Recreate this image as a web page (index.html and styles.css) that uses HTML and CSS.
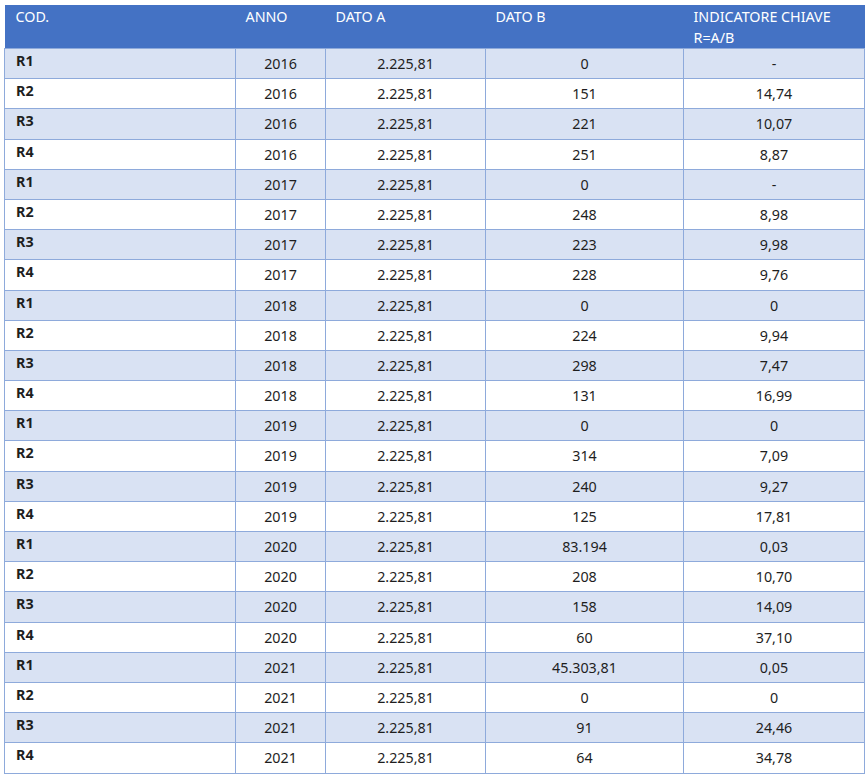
FILE: index.html
```html
<!DOCTYPE html>
<html lang="it">
<head>
<meta charset="utf-8">
<link rel="stylesheet" href="styles.css">
</head>
<body>
<table class="grid">
  <colgroup>
    <col class="c1"><col class="c2"><col class="c3"><col class="c4"><col class="c5">
  </colgroup>
  <thead>
    <tr class="head">
      <th class="first">COD.</th><th>ANNO</th><th>DATO A</th><th>DATO B</th><th>INDICATORE CHIAVE<br>R=A/B</th>
    </tr>
  </thead>
  <tbody>
    <tr class="alt"><td class="code">R1</td><td>2016</td><td>2.225,81</td><td>0</td><td>-</td></tr>
    <tr><td class="code">R2</td><td>2016</td><td>2.225,81</td><td>151</td><td>14,74</td></tr>
    <tr class="alt"><td class="code">R3</td><td>2016</td><td>2.225,81</td><td>221</td><td>10,07</td></tr>
    <tr><td class="code">R4</td><td>2016</td><td>2.225,81</td><td>251</td><td>8,87</td></tr>
    <tr class="alt"><td class="code">R1</td><td>2017</td><td>2.225,81</td><td>0</td><td>-</td></tr>
    <tr><td class="code">R2</td><td>2017</td><td>2.225,81</td><td>248</td><td>8,98</td></tr>
    <tr class="alt"><td class="code">R3</td><td>2017</td><td>2.225,81</td><td>223</td><td>9,98</td></tr>
    <tr><td class="code">R4</td><td>2017</td><td>2.225,81</td><td>228</td><td>9,76</td></tr>
    <tr class="alt"><td class="code">R1</td><td>2018</td><td>2.225,81</td><td>0</td><td>0</td></tr>
    <tr><td class="code">R2</td><td>2018</td><td>2.225,81</td><td>224</td><td>9,94</td></tr>
    <tr class="alt"><td class="code">R3</td><td>2018</td><td>2.225,81</td><td>298</td><td>7,47</td></tr>
    <tr><td class="code">R4</td><td>2018</td><td>2.225,81</td><td>131</td><td>16,99</td></tr>
    <tr class="alt"><td class="code">R1</td><td>2019</td><td>2.225,81</td><td>0</td><td>0</td></tr>
    <tr><td class="code">R2</td><td>2019</td><td>2.225,81</td><td>314</td><td>7,09</td></tr>
    <tr class="alt"><td class="code">R3</td><td>2019</td><td>2.225,81</td><td>240</td><td>9,27</td></tr>
    <tr><td class="code">R4</td><td>2019</td><td>2.225,81</td><td>125</td><td>17,81</td></tr>
    <tr class="alt"><td class="code">R1</td><td>2020</td><td>2.225,81</td><td>83.194</td><td>0,03</td></tr>
    <tr><td class="code">R2</td><td>2020</td><td>2.225,81</td><td>208</td><td>10,70</td></tr>
    <tr class="alt"><td class="code">R3</td><td>2020</td><td>2.225,81</td><td>158</td><td>14,09</td></tr>
    <tr><td class="code">R4</td><td>2020</td><td>2.225,81</td><td>60</td><td>37,10</td></tr>
    <tr class="alt"><td class="code">R1</td><td>2021</td><td>2.225,81</td><td>45.303,81</td><td>0,05</td></tr>
    <tr><td class="code">R2</td><td>2021</td><td>2.225,81</td><td>0</td><td>0</td></tr>
    <tr class="alt"><td class="code">R3</td><td>2021</td><td>2.225,81</td><td>91</td><td>24,46</td></tr>
    <tr><td class="code">R4</td><td>2021</td><td>2.225,81</td><td>64</td><td>34,78</td></tr>
  </tbody>
</table>
</body>
</html>
```

FILE: styles.css
```css
html, body {
  margin: 0;
  padding: 0;
  background: #ffffff;
}

body {
  padding: 5px 0 0 4px;
  font-family: "Noto Sans", "Open Sans", sans-serif;
  font-size: 14.3px;
  color: #1e1e1e;
}

.grid {
  border-collapse: collapse;
  table-layout: fixed;
  width: 860px;
}

.c1 { width: 231px; }
.c2 { width: 90px; }
.c3 { width: 160px; }
.c4 { width: 198px; }
.c5 { width: 181px; }

.head {
  background: #4472c4;
  height: 41.5px;
}

.head th {
  color: #ffffff;
  font-weight: 400;
  text-align: left;
  vertical-align: top;
  line-height: 21px;
  padding: 1px 4px 0 10px;
  border: none;
}

.head th.first {
  padding-left: 11px;
}

tbody tr {
  height: 30.2px;
}

tbody tr.alt {
  background: #d9e2f3;
}

tbody td {
  border: 1px solid #8eaadb;
  text-align: center;
  vertical-align: top;
  line-height: 21px;
  padding: 4px 4px 0 4px;
}

tbody td.code {
  text-align: left;
  font-weight: 700;
  padding: 1px 4px 0 11px;
}
```
